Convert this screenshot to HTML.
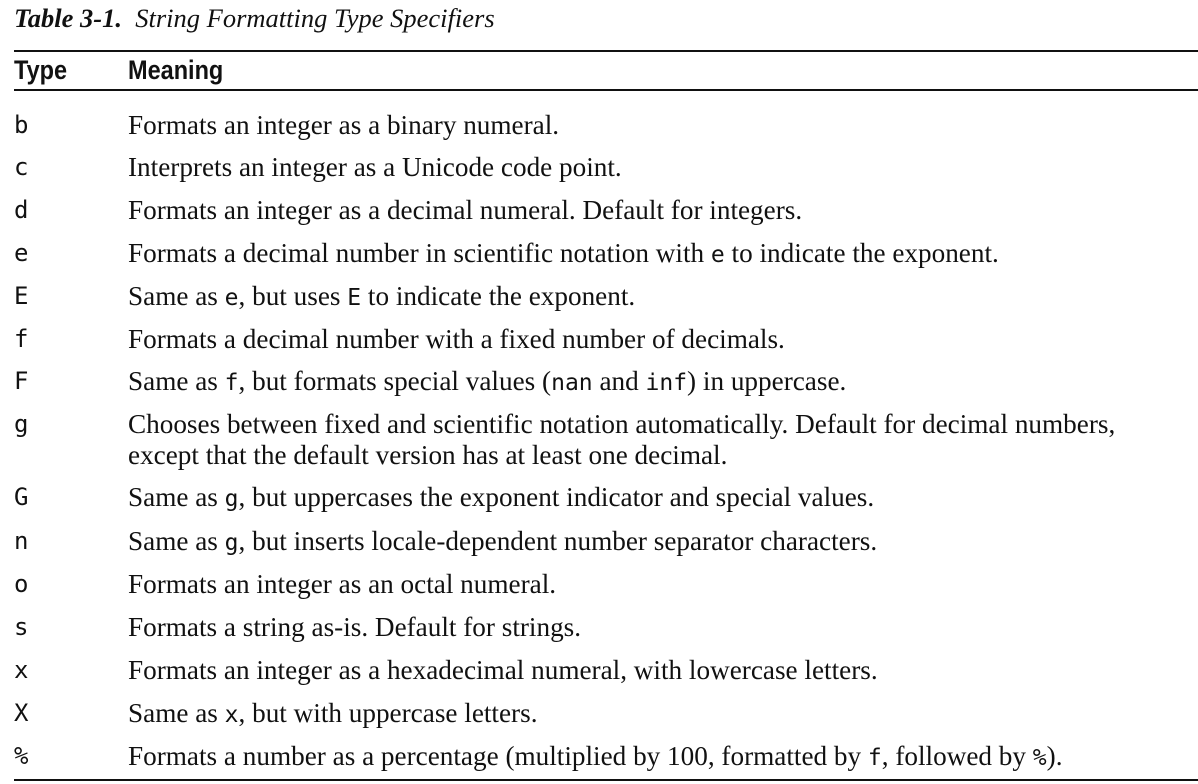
<!DOCTYPE html>
<html><head><meta charset="utf-8"><style>
body{margin:0;width:1198px;height:784px;background:#fff;position:relative;overflow:hidden;color:#111}
.t{position:absolute;left:14px;top:3px;font-family:"Liberation Serif",serif;font-size:26.5px;font-style:italic;white-space:nowrap}
.hr{position:absolute;left:14px;right:0;height:2px;background:#111}
.h{position:absolute;top:55px;font-family:"Liberation Sans Narrow","Liberation Sans",sans-serif;font-weight:bold;font-size:27px;line-height:30px;transform:scaleX(0.87);transform-origin:left}
.r{position:absolute;left:0;width:1198px;height:30px;line-height:30px}
.k{position:absolute;left:14px;font-family:"DejaVu Sans Mono","Liberation Mono",monospace;font-size:24px}
.m{position:absolute;left:128px;font-family:"Liberation Serif",serif;font-size:27.2px;white-space:nowrap}
code{font-family:"DejaVu Sans Mono","Liberation Mono",monospace;font-size:23px}
</style></head><body>
<div class="t"><b>Table 3-1.</b>&nbsp; String Formatting Type Specifiers</div>
<div class="hr" style="top:50px"></div>
<div class="h" style="left:14px">Type</div>
<div class="h" style="left:128px">Meaning</div>
<div class="hr" style="top:89px;height:1.5px"></div>
<div class="r" style="top:110px"><span class="k">b</span><span class="m">Formats an integer as a binary numeral.</span></div>
<div class="r" style="top:152px"><span class="k">c</span><span class="m">Interprets an integer as a Unicode code point.</span></div>
<div class="r" style="top:195px"><span class="k">d</span><span class="m">Formats an integer as a decimal numeral. Default for integers.</span></div>
<div class="r" style="top:238px"><span class="k">e</span><span class="m">Formats a decimal number in scientific notation with <code>e</code> to indicate the exponent.</span></div>
<div class="r" style="top:281px"><span class="k">E</span><span class="m">Same as <code>e</code>, but uses <code>E</code> to indicate the exponent.</span></div>
<div class="r" style="top:324px"><span class="k">f</span><span class="m">Formats a decimal number with a fixed number of decimals.</span></div>
<div class="r" style="top:366px"><span class="k">F</span><span class="m">Same as <code>f</code>, but formats special values (<code>nan</code> and <code>inf</code>) in uppercase.</span></div>
<div class="r" style="top:409px"><span class="k">g</span><span class="m">Chooses between fixed and scientific notation automatically. Default for decimal numbers,</span></div>
<div class="r" style="top:440px"><span class="m">except that the default version has at least one decimal.</span></div>
<div class="r" style="top:482px"><span class="k">G</span><span class="m">Same as <code>g</code>, but uppercases the exponent indicator and special values.</span></div>
<div class="r" style="top:526px"><span class="k">n</span><span class="m">Same as <code>g</code>, but inserts locale-dependent number separator characters.</span></div>
<div class="r" style="top:569px"><span class="k">o</span><span class="m">Formats an integer as an octal numeral.</span></div>
<div class="r" style="top:612px"><span class="k">s</span><span class="m">Formats a string as-is. Default for strings.</span></div>
<div class="r" style="top:655px"><span class="k">x</span><span class="m">Formats an integer as a hexadecimal numeral, with lowercase letters.</span></div>
<div class="r" style="top:698px"><span class="k">X</span><span class="m">Same as <code>x</code>, but with uppercase letters.</span></div>
<div class="r" style="top:741px"><span class="k">%</span><span class="m">Formats a number as a percentage (multiplied by 100, formatted by <code>f</code>, followed by <code>%</code>).</span></div>
<div class="hr" style="top:779px"></div>
</body></html>
